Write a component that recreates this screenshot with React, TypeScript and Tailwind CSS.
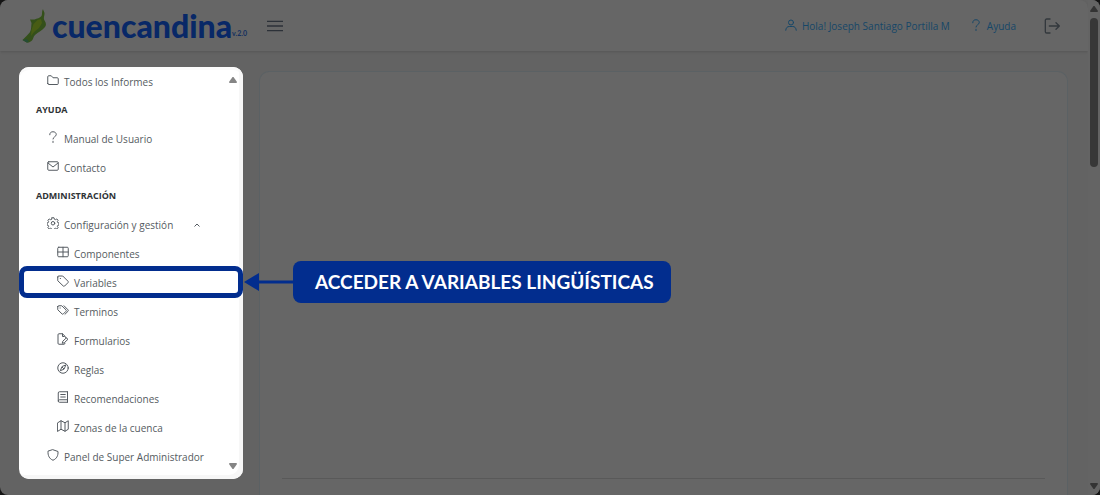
import React from 'react';

type IconName =
  | 'folder'
  | 'question'
  | 'envelope'
  | 'cog'
  | 'table'
  | 'tag'
  | 'tags'
  | 'fileEdit'
  | 'compass'
  | 'book'
  | 'map'
  | 'shield'
  | 'user'
  | 'signOut'
  | 'bars';

const icons: Record<IconName, React.ReactNode> = {
  folder: <path d="M1.5 19V5.5a2 2 0 0 1 2-2h5l3.5 4h8.500a2 2 0 0 1 2 2V19a2 2 0 0 1-2 2h-17a2 2 0 0 1-2-2z" />,
  question: (
    <>
      <path d="M5.500 7.500C5.500 3.500 8 1.500 12 1.500s6.500 2.500 6.500 5.500c0 4.500-6.500 4.500-6.500 9" />
      <path d="M12 20.500v2.500" />
    </>
  ),
  envelope: (
    <>
      <rect x="1.500" y="3.500" width="21" height="17" rx="2" />
      <path d="M2 6l10 8 10-8" />
    </>
  ),
  cog: (
    <>
      <path d="M10 1.500h4l.8 3 2 .9 2.800-1.500 2.600 2.700-1.500 2.700.8 1.900 2.500.8v4l-2.500.8-.8 1.900 1.500 2.700-2.600 2.600-2.800-1.500-2 .9-.8 2.600h-4l-.8-2.600-2-.9-2.800 1.500-2.600-2.600 1.500-2.700-.8-1.900-2.500-.8v-4l2.500-.8.8-1.900-1.500-2.700 2.600-2.700 2.800 1.500 2-.9z" />
      <circle cx="12" cy="12.500" r="3.500" />
    </>
  ),
  table: (
    <>
      <rect x="1.500" y="2.500" width="21" height="19" rx="2" />
      <path d="M12 2.500v19M1.500 12h21" />
    </>
  ),
  tag: (
    <>
      <path d="M1.500 4v7.500L12.500 22a2 2 0 0 0 2.800 0l6.700-6.700a2 2 0 0 0 0-2.800L11.500 2h-8a2 2 0 0 0-2 2z" />
      <path d="M6.500 7h.5" />
    </>
  ),
  tags: (
    <>
      <path d="M1.500 5v6.500l8.500 8.300a2 2 0 0 0 2.800 0l5.200-5.300a2 2 0 0 0 0-2.800L9.500 3.500h-6a2 2 0 0 0-2 1.500z" />
      <path d="M14 3.500l8 8.200a2 2 0 0 1 0 2.800L16 20.500M6 8h.5" />
    </>
  ),
  fileEdit: (
    <>
      <path d="M16 20.500a2 2 0 0 1-2 2H4a2 2 0 0 1-2-2v-17a2 2 0 0 1 2-2h7l5 5" />
      <path d="M11 1.500v5.500h4l7 5.500-7.500 7-4 1 1-4 7-6.500" />
    </>
  ),
  compass: (
    <>
      <circle cx="12" cy="12" r="10.500" />
      <path d="M17.500 6.500l-3.300 7.700-7.700 3.300 3.300-7.700zM10.500 10.500l3 3" />
    </>
  ),
  book: (
    <>
      <path d="M21 17.500H5a2.500 2.500 0 0 0 0 5h16M21 1.500v21M21 1.500H5a2.500 2.500 0 0 0-2.500 2.500v16" />
      <path d="M7.500 7h9M7.500 12h9" />
    </>
  ),
  map: <path d="M1.500 5.500l6.500-4 8 4 6.500-4v17l-6.500 4-8-4-6.500 4zM8 1.500v17M16 5.500v17" />,
  shield: <path d="M12 1.500l10 3.500c.5 8-2.500 14.500-10 17.500C4.500 19.500 1.500 13 2 5z" />,
  user: (
    <>
      <circle cx="12" cy="7" r="5" />
      <path d="M1.500 22.500c.5-5 3-7.500 7-7.500h7c4 0 6.500 2.500 7 7.500" />
    </>
  ),
  signOut: <path d="M9 1.500H4a2 2 0 0 0-2 2v17a2 2 0 0 0 2 2h5M8 12h15M18 7l5 5-5 5" />,
  bars: <path d="M0 5h24M0 12h24M0 19h24" />,
};

const Icon: React.FC<{ name: IconName; className?: string }> = ({ name, className = 'mb-1 size-3' }) => (
  <svg
    viewBox="0 0 24 24"
    fill="none"
    stroke="currentColor"
    strokeWidth="2"
    strokeLinecap="round"
    strokeLinejoin="round"
    className={`shrink-0 ${className}`}
    aria-hidden="true"
  >
    {icons[name]}
  </svg>
);

const Triangle: React.FC<{ down?: boolean }> = ({ down }) => (
  <svg viewBox="0 0 8 6" className="h-1.5 w-2 fill-current" aria-hidden="true">
    <path d={down ? 'M0.500 0h7L8 1 4.500 6h-1L0 1z' : 'M3.500 0h1L8 5l-.5 1h-7L0 5z'} />
  </svg>
);

const Logo: React.FC = () => (
  <a href="#inicio" className="flex items-center">
    <svg viewBox="0 0 26 36" className="h-9 w-[26px]" aria-hidden="true">
      <path d="M21 1c-1.500 2.500-.5 5-1.500 7-1.500 2-4.500 2.500-7 3.500L8 11.500 9.500 15 9 21c-.5 3-2 4.500-4 6.500L0.500 32l4 2.500c2 .5 4-.5 5.500-2 1.500-1.500 1-3.500 3-5.500 3-3 7.500-4.500 10-8 2-2.500.500-5-1-7.500-.5-2 .5-4 .5-6C22.500 3.500 21 2.500 21 1z" fill="#34501a" />
      <path d="M19 11l1 4-3 5-5 4-3 4 .5-6 2-6 4-4z" fill="#485c14" />
      <path d="M0.500 32l4-1 2.500 2.500-2 1z" fill="#254c35" />
    </svg>
    <span className="ml-1 font-['Lato'] text-[32px] leading-none font-black text-[#082867]">cuencandina</span>
    <span className="mt-4 font-['Lato'] text-[7px] leading-none font-bold text-[#132f60]">v.2.0</span>
  </a>
);

const Header: React.FC = () => (
  <header className="flex h-[51px] shrink-0 items-center rounded-t-lg bg-[#666666] pr-7 pl-[22px] shadow">
    <Logo />
    <button type="button" aria-label="Menú" className="ml-5 text-[#2c3138]">
      <Icon name="bars" className="size-4" />
    </button>
    <div className="ml-auto flex items-center text-[10px] text-[#164768]">
      <a href="#perfil" className="flex items-center gap-[5px] pt-0.5">
        <Icon name="user" />
        Hola! Joseph Santiago Portilla M
      </a>
      <a href="#ayuda" className="ml-5 flex items-center gap-[5px] pt-0.5">
        <Icon name="question" />
        Ayuda
      </a>
      <button type="button" aria-label="Salir" className="ml-7 text-[#33383d]">
        <Icon name="signOut" className="size-4" />
      </button>
    </div>
  </header>
);

type MenuEntry = {
  label: string;
  icon?: IconName;
  level?: number;
  expanded?: boolean;
  highlighted?: boolean;
};

const menu: MenuEntry[] = [
  { label: 'Todos los Informes', icon: 'folder' },
  { label: 'AYUDA' },
  { label: 'Manual de Usuario', icon: 'question' },
  { label: 'Contacto', icon: 'envelope' },
  { label: 'ADMINISTRACIÓN' },
  { label: 'Configuración y gestión', icon: 'cog', expanded: true },
  { label: 'Componentes', icon: 'table', level: 1 },
  { label: 'Variables', icon: 'tag', level: 1, highlighted: true },
  { label: 'Terminos', icon: 'tags', level: 1 },
  { label: 'Formularios', icon: 'fileEdit', level: 1 },
  { label: 'Reglas', icon: 'compass', level: 1 },
  { label: 'Recomendaciones', icon: 'book', level: 1 },
  { label: 'Zonas de la cuenca', icon: 'map', level: 1 },
  { label: 'Panel de Super Administrador', icon: 'shield' },
];

const Callout: React.FC = () => (
  <div className="pointer-events-none absolute -top-0.5 -bottom-px left-0 z-10 w-56 rounded-lg border-[5px] border-[#022d8e]">
    <div className="absolute inset-y-0 left-full ml-1.5 flex items-center">
      <svg viewBox="0 0 49 18" className="h-[18px] w-[49px] shrink-0 fill-[#022d8e]" aria-hidden="true">
        <path d="M0 9L15 0v7.500h34v3H15V18z" />
      </svg>
      <span className="rounded-lg bg-[#022d8e] py-[7px] pr-[17px] pl-[22px] font-['Lato'] text-[19px] leading-7 font-bold whitespace-nowrap text-white">
        ACCEDER A VARIABLES LINGÜÍSTICAS
      </span>
    </div>
  </div>
);

const MenuItem: React.FC<{ entry: MenuEntry }> = ({ entry }) => {
  if (!entry.icon) {
    return <li className="flex h-7 items-center pl-[17px] text-[9px] font-bold text-[#2f3336]">{entry.label}</li>;
  }

  return (
    <li className="relative">
      <a
        href="#menu"
        className={`flex h-[29px] items-center gap-[5px] pt-px whitespace-nowrap ${entry.level ? 'pl-[38px]' : 'pl-7'}`}
      >
        <Icon name={entry.icon} />
        {entry.label}
        {entry.expanded && (
          <svg viewBox="0 0 6 4" className="ml-4 h-1 w-1.5" fill="none" stroke="currentColor" aria-hidden="true">
            <path d="M0.500 3.500L3 1l2.500 2.500" />
          </svg>
        )}
      </a>
      {entry.highlighted && <Callout />}
    </li>
  );
};

const Sidebar: React.FC = () => (
  <aside className="flex w-56 shrink-0 self-start rounded-[10px] bg-white pb-2 shadow-[inset_-4px_-4px_0_#f7f7f7,inset_0_3px_0_#fafafa]">
    <nav className="min-w-0 flex-1">
      <ul className="text-[10px] text-[#555b61]">
        {menu.map((entry) => (
          <MenuItem key={entry.label} entry={entry} />
        ))}
      </ul>
    </nav>
    <div className="flex flex-col justify-between pt-2.5 pr-1.5 pb-0.5 text-[#858585]">
      <Triangle />
      <Triangle down />
    </div>
  </aside>
);

const App: React.FC = () => {
  return (
    <div className="flex h-screen overflow-hidden bg-[#151515] font-['Open_Sans',sans-serif]">
      <div className="flex min-w-0 flex-1 overflow-hidden rounded-lg bg-[#636363]">
        <div className="flex min-w-0 flex-1 flex-col">
          <Header />
          <div className="flex min-h-0 flex-1 gap-4 pt-4 pr-5 pl-[19px]">
            <Sidebar />
            <main className="mt-1 flex min-w-0 flex-1 flex-col rounded-t-[10px] border border-b-0 border-[#5b6164] bg-[#666666] px-[22px]">
              <div className="mb-4 flex-1 border-b border-[#595959]" />
            </main>
          </div>
        </div>
        <div className="flex w-3 shrink-0 flex-col items-center bg-[#646464] py-1.5 text-[#333333]">
          <Triangle />
          <div className="mt-1.5 h-[149px] w-2 rounded-full bg-[#373737]" />
          <div className="mt-auto">
            <Triangle down />
          </div>
        </div>
      </div>
    </div>
  );
};

export default App;
